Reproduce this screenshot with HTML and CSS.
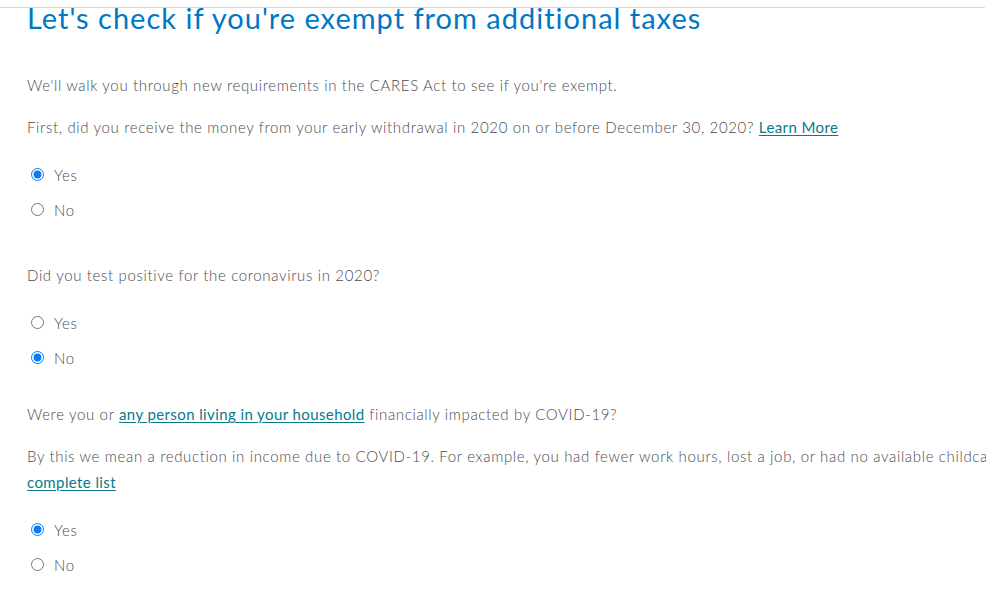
FILE: index.html
```html
<!DOCTYPE html>
<html lang="en">
<head>
<meta charset="utf-8">
<title>CARES Act exemption</title>
<link rel="stylesheet" href="styles.css">
</head>
<body>
<div class="page">
  <div class="topline"></div>
  <main class="content">
    <h1 class="title">Let's check if you're exempt from additional taxes</h1>
    <p class="text intro">We'll walk you through new requirements in the CARES Act to see if you're exempt.</p>
    <p class="text q">First, did you receive the money from your early withdrawal in 2020 on or before December 30, 2020? <a href="#" class="link">Learn More</a></p>
    <div class="choices">
      <label class="choice"><input type="radio" name="q1" checked><span>Yes</span></label>
      <label class="choice"><input type="radio" name="q1"><span>No</span></label>
    </div>
    <p class="text q2">Did you test positive for the coronavirus in 2020?</p>
    <div class="choices">
      <label class="choice"><input type="radio" name="q2"><span>Yes</span></label>
      <label class="choice"><input type="radio" name="q2" checked><span>No</span></label>
    </div>
    <p class="text q3">Were you or <a href="#" class="link">any person living in your household</a> financially impacted by COVID-19?</p>
    <p class="text q"><span class="nowrap">By this we mean a reduction in income due to COVID-19. For example, you had fewer work hours, lost a job, or had no available childcare. See the</span><br><a href="#" class="link">complete list</a></p>
    <div class="choices">
      <label class="choice"><input type="radio" name="q3" checked><span>Yes</span></label>
      <label class="choice"><input type="radio" name="q3"><span>No</span></label>
    </div>
  </main>
</div>
</body>
</html>
```
FILE: styles.css
```css
html, body {
  margin: 0;
  padding: 0;
  background: #ffffff;
}
body {
  width: 986px;
  height: 601px;
  overflow: hidden;
  font-family: Lato, "Open Sans", Arial, sans-serif;
}
.page {
  padding-top: 7px;
}
.topline {
  border-top: 1px solid #d6d7d9;
  margin-right: 1px;
}
.content {
  padding-left: 27px;
}
.title {
  margin: -7px 0 0;
  font-size: 29px;
  line-height: 34px;
  font-weight: 400;
  letter-spacing: 1px;
  color: #0077c5;
  white-space: nowrap;
}
.text {
  margin: 0;
  font-size: 15px;
  line-height: 26px;
  font-weight: 300;
  letter-spacing: 0.65px;
  color: #4a4b50;
  white-space: nowrap;
}
.intro {
  margin-top: 37px;
}
.q {
  margin-top: 16px;
}
.q2 {
  margin-top: 35px;
}
.q3 {
  margin-top: 26px;
}
.link {
  color: #087a8a;
  font-weight: 400;
  letter-spacing: 0.4px;
  text-decoration: underline;
  text-underline-offset: 2px;
}
.choices {
  margin-top: 17px;
  display: flex;
  flex-direction: column;
}
.choice {
  height: 35px;
  display: flex;
  align-items: center;
  gap: 10px;
  font-size: 15px;
  font-weight: 300;
  letter-spacing: 0.65px;
  color: #4a4b50;
}
.choice input {
  margin: 0 0 0 4px;
  width: 13px;
  height: 13px;
  accent-color: #0a7cf2;
}
.nowrap {
  white-space: nowrap;
}
```
